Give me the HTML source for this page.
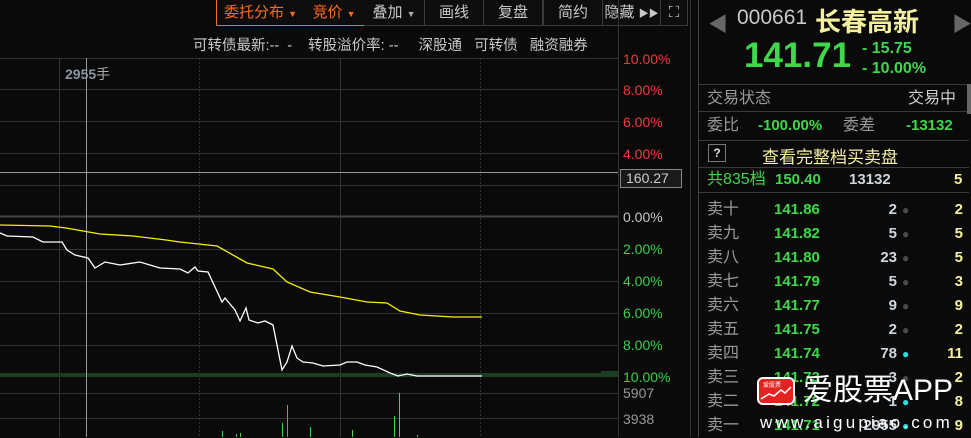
<!DOCTYPE html>
<html><head><meta charset="utf-8"><style>
*{margin:0;padding:0;box-sizing:border-box}
body{width:971px;height:437px;background:#0a0a0a;overflow:hidden;position:relative;font-family:"Liberation Sans","Noto Sans CJK SC",sans-serif;color:#c8c8c8}
.a{position:absolute;white-space:nowrap}
.btn{position:absolute;top:0;height:26px;border:1px solid #3a3a3a;border-top:none;font-size:15px;color:#c8c8c8;text-align:center;line-height:25px;background:#0d0d0d}
.o{color:#ff6a1a;border-color:#ff6a1a}
.ax{position:absolute;left:623px;font-size:14px;color:#3fcf4a;line-height:16px}
.r{font-size:15px;line-height:18px}
.g{color:#3fd84a;font-weight:bold}
.w{color:#cfd6dc;font-weight:bold}
.y{color:#f5f0a0;font-weight:bold}
.lab{color:#9a9a9a}
.hl{position:absolute;height:1px;background:#3a3a3a}
</style></head><body>
<div class="btn o" style="left:216px;width:89px">委托分布 <span style="font-size:9px">▼</span></div>
<div class="btn o" style="left:304px;width:61px;border-left:none">竞价 <span style="font-size:9px">▼</span></div>
<div class="btn" style="left:364px;width:61px;border-left:none">叠加 <span style="font-size:9px;color:#aaa">▼</span></div>
<div class="btn" style="left:424px;width:60px">画线</div>
<div class="btn" style="left:483px;width:60px">复盘</div>
<div class="btn" style="left:543px;width:60px">简约</div>
<div class="btn" style="left:602px;width:59px">隐藏 <span style="font-size:10px">▶▶</span></div>
<div class="btn" style="left:660px;width:28px">⛶</div>
<div class="a" style="left:193px;top:34px;font-size:14.5px;color:#c8c8c8">可转债最新:--&nbsp;&nbsp;-&nbsp;&nbsp;&nbsp;&nbsp;转股溢价率: --&nbsp;&nbsp;&nbsp;&nbsp;&nbsp;深股通&nbsp;&nbsp;&nbsp;可转债&nbsp;&nbsp;&nbsp;融资融券</div>

<svg class="a" style="left:0;top:0" width="698" height="437">
<g stroke="#333" stroke-width="1">
<line x1="0" y1="58.5" x2="618" y2="58.5"/>
<line x1="0" y1="89.5" x2="618" y2="89.5"/>
<line x1="0" y1="121.5" x2="618" y2="121.5"/>
<line x1="0" y1="153.5" x2="618" y2="153.5"/>
<line x1="0" y1="185.5" x2="618" y2="185.5"/>
<line x1="0" y1="216.5" x2="618" y2="216.5" stroke="#444" stroke-width="2"/>
<line x1="0" y1="249.5" x2="618" y2="249.5"/>
<line x1="0" y1="281.5" x2="618" y2="281.5"/>
<line x1="0" y1="313.5" x2="618" y2="313.5"/>
<line x1="0" y1="345.5" x2="618" y2="345.5"/>
<line x1="0" y1="393.5" x2="618" y2="393.5"/>
<line x1="0" y1="418.5" x2="618" y2="418.5"/>
<line x1="59.5" y1="58" x2="59.5" y2="437"/>
<line x1="340.5" y1="58" x2="340.5" y2="437"/>
<line x1="618.5" y1="0" x2="618.5" y2="437"/>
<line x1="690.5" y1="0" x2="690.5" y2="437"/>
<line x1="199.5" y1="58" x2="199.5" y2="437" stroke-dasharray="2,2"/>
<line x1="480.5" y1="58" x2="480.5" y2="437" stroke-dasharray="2,2"/>
</g>
<rect x="0" y="373" width="618" height="4" fill="#1b3e22"/>
<rect x="601" y="371" width="17" height="6" fill="#1b3e22"/>
<line x1="0" y1="172.5" x2="618" y2="172.5" stroke="#9a9a9a"/>
<line x1="86.5" y1="58" x2="86.5" y2="437" stroke="#9a9a9a"/>
<polyline fill="none" stroke="#f2f200" stroke-width="1.3" points="0,225 50,226 66,228 100,234 133,236 166,240 180,242 217,246 240,259 247,263 273,269 287,282 310,292 340,297 367,302 387,303 400,311 420,315 453,317 482,317"/>
<polyline fill="none" stroke="#fff" stroke-width="1.3" points="0,233 7,236 33,237 43,242 62,242 67,250 75,255 88,258 95,268 105,262 120,265 140,262 160,268 180,269 188,273 195,267 198,271 208,272 222,302 225,298 235,310 240,321 246,308 249,320 258,323 265,321 273,325 282,370 287,362 292,346 297,358 303,362 313,363 323,366 340,365 347,362 357,362 365,365 377,367 390,373 398,376 407,374 417,376 482,376"/>
<g stroke="#3fd84a" stroke-width="1">
<line x1="222.5" y1="431" x2="222.5" y2="437"/><line x1="236.5" y1="434" x2="236.5" y2="437"/><line x1="240.5" y1="433" x2="240.5" y2="437"/>
<line x1="282.5" y1="423" x2="282.5" y2="437"/><line x1="310.5" y1="427" x2="310.5" y2="437"/><line x1="352.5" y1="430" x2="352.5" y2="437"/>
<line x1="394.5" y1="416" x2="394.5" y2="437"/><line x1="399.5" y1="393" x2="399.5" y2="437"/><line x1="417.5" y1="435" x2="417.5" y2="437"/>
</g>
<line x1="287.5" y1="405" x2="287.5" y2="437" stroke="#e06a5a"/>
</svg>
<div class="a" style="left:65px;top:64px;font-size:14px;font-weight:bold;color:#8a96a0">2955<span style="font-weight:normal;color:#aaa">手</span></div>

<div class="ax" style="top:51px;color:#f03a3a">10.00%</div>
<div class="ax" style="top:82px;color:#f03a3a">8.00%</div>
<div class="ax" style="top:114px;color:#f03a3a">6.00%</div>
<div class="ax" style="top:146px;color:#f03a3a">4.00%</div>
<div class="a" style="left:620px;top:169px;width:62px;height:19px;border:1px solid #888;background:#1a1a1a;color:#ccc;font-size:14px;line-height:17px;padding-left:5px">160.27</div>
<div class="ax" style="top:209px;color:#c8c8c8">0.00%</div>
<div class="ax" style="top:241px">2.00%</div>
<div class="ax" style="top:273px">4.00%</div>
<div class="ax" style="top:305px">6.00%</div>
<div class="ax" style="top:337px">8.00%</div>
<div class="ax" style="top:369px">10.00%</div>
<div class="ax" style="top:385px;color:#999">5907</div>
<div class="ax" style="top:411px;color:#999">3938</div>

<div class="a" style="left:698px;top:0;width:1px;height:437px;background:#444"></div>
<div class="a" style="left:708px;top:8px;font-size:20px;color:#666">◀</div>
<div class="a" style="left:952px;top:8px;font-size:20px;color:#666">▶</div>
<div class="a" style="left:737px;top:6px;font-size:21px;color:#c8c8c8">000661</div>
<div class="a" style="left:815px;top:2px;font-size:26px;color:#f5f0a0;font-weight:bold">长春高新</div>
<div class="a" style="left:744px;top:36px;font-size:35px;color:#3fd84a;font-weight:bold">141.71</div>
<div class="a g" style="left:862px;top:40px;font-size:16px">- 15.75</div>
<div class="a g" style="left:862px;top:60px;font-size:16px">- 10.00%</div>
<div class="hl" style="left:699px;top:84px;width:270px"></div>
<div class="hl" style="left:699px;top:111px;width:270px"></div>
<div class="hl" style="left:699px;top:140px;width:270px"></div>
<div class="hl" style="left:699px;top:167px;width:270px"></div>
<div class="hl" style="left:699px;top:192px;width:270px"></div>
<div class="a" style="left:967px;top:84px;width:4px;height:30px;background:#666"></div>
<div class="a r lab" style="left:707px;top:90px;font-size:16px">交易状态</div>
<div class="a r" style="left:908px;top:90px;font-size:16px;color:#ccc">交易中</div>
<div class="a r lab" style="left:707px;top:117px;font-size:16px">委比</div>
<div class="a r g" style="left:758px;top:117px">-100.00%</div>
<div class="a r lab" style="left:843px;top:117px;font-size:16px">委差</div>
<div class="a r g" style="left:906px;top:117px">-13132</div>
<div class="a" style="left:708px;top:144px;width:18px;height:18px;border:1px solid #777;color:#ddd;font-size:12px;text-align:center;line-height:16px;font-weight:bold">?</div>
<div class="a" style="left:762px;top:143px;font-size:17px;color:#f5f0a0">查看完整档买卖盘</div>
<div class="a r" style="left:707px;top:171px;font-size:16px;color:#3fd84a">共835档</div>
<div class="a r g" style="left:775px;top:171px">150.40</div>
<div class="a r w" style="left:849px;top:171px">13132</div>
<div class="a r y" style="left:954px;top:171px">5</div>

<div class="a" style="left:707px;top:198px;font-size:16px;line-height:24px;color:#9a9a9a">卖十<br>卖九<br>卖八<br>卖七<br>卖六<br>卖五<br>卖四<br>卖三<br>卖二<br>卖一</div>
<div class="a g" style="left:774px;top:198px;font-size:15px;line-height:24px">141.86<br>141.82<br>141.80<br>141.79<br>141.77<br>141.75<br>141.74<br>141.73<br>141.72<br>141.71</div>
<div class="a w" style="left:850px;top:198px;width:47px;text-align:right;font-size:15px;line-height:24px">2<br>5<br>23<br>5<br>9<br>2<br>78<br>3<br>1<br>2955</div>
<div class="a" style="left:902px;top:198px;font-size:12px;line-height:24px;color:#4a4a4a">●<br>●<br>●<br>●<br>●<br>●<br><span style="color:#22e0e0">●</span><br>●<br><span style="color:#22e0e0">●</span><br><span style="color:#22e0e0">●</span></div>
<div class="a y" style="left:920px;top:198px;width:43px;text-align:right;font-size:15px;line-height:24px">2<br>5<br>5<br>3<br>9<br>2<br>11<br>2<br>8<br>9</div>

<div class="a" style="left:757px;top:377px;width:38px;height:28px;border-radius:6px;background:#fff"></div>
<svg class="a" style="left:757px;top:377px" width="38" height="28"><rect x="2" y="2" width="34" height="24" rx="4" fill="#e52222"/><text x="6" y="10" font-size="6" fill="#fff" font-family="Noto Sans CJK SC">爱股票</text><polyline points="4,22 12,17 17,19 24,13 28,16 34,10" fill="none" stroke="#fff" stroke-width="1.5"/></svg>
<div class="a" style="left:803px;top:374px;font-size:30px;color:#fff;line-height:34px">爱股票APP</div>
<div class="a" style="left:760px;top:414px;font-size:17px;color:#fff;letter-spacing:3.2px;line-height:18px">www.aigupiao.com</div>
</body></html>
